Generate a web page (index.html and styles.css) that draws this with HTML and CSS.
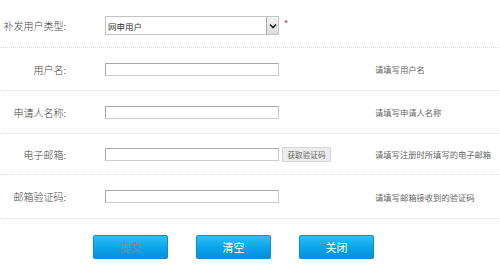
FILE: index.html
```html
<!DOCTYPE html>
<html lang="zh-CN">
<head>
<meta charset="utf-8">
<title>补发用户</title>
<link rel="stylesheet" href="styles.css">
</head>
<body>
<div class="form">
  <div class="row row-first">
    <div class="label">补发用户类型:</div>
    <div class="field">
      <div class="select">
        <span class="select-text">网申用户</span>
        <span class="select-btn">
          <svg width="8" height="6" viewBox="0 0 8 6"><path d="M1 1.5 L4 4.5 L7 1.5" fill="none" stroke="#222" stroke-width="1.6"/></svg>
        </span>
      </div>
      <span class="req">*</span>
    </div>
    <div class="hint"></div>
  </div>
  <div class="row">
    <div class="label">用户名:</div>
    <div class="field"><div class="input"></div></div>
    <div class="hint">请填写用户名</div>
  </div>
  <div class="row">
    <div class="label">申请人名称:</div>
    <div class="field"><div class="input"></div></div>
    <div class="hint">请填写申请人名称</div>
  </div>
  <div class="row row-mail">
    <div class="label">电子邮箱:</div>
    <div class="field"><div class="input"></div><div class="code-btn">获取验证码</div></div>
    <div class="hint">请填写注册时所填写的电子邮箱</div>
  </div>
  <div class="row row-last">
    <div class="label">邮箱验证码:</div>
    <div class="field"><div class="input"></div></div>
    <div class="hint">请填写邮箱接收到的验证码</div>
  </div>
  <div class="actions">
    <div class="btn btn-disabled">提交</div>
    <div class="btn">清空</div>
    <div class="btn">关闭</div>
  </div>
</div>
</body>
</html>
```
FILE: styles.css
```css
html, body {
  margin: 0;
  padding: 0;
  background: #fff;
}
body {
  font-family: "Noto Sans CJK SC", "Noto Sans", sans-serif;
  color: #333;
}
.form {
  width: 500px;
}
.row {
  display: flex;
  align-items: center;
  height: 42px;
  border-bottom: 1px dotted #dedede;
}
.row-first {
  padding-top: 4px;
  box-sizing: border-box;
  height: 48px;
}
.row-mail {
  height: 40px;
}
.row-last {
  height: 43px;
}
.label {
  width: 66px;
  text-align: right;
  font-size: 10px;
  font-weight: 300;
  color: #444;
  white-space: nowrap;
}
.field {
  width: 270px;
  margin-left: 39px;
  display: flex;
  align-items: center;
}
.select {
  width: 174px;
  height: 19px;
  box-sizing: border-box;
  border: 1px solid #c4c4c4;
  display: flex;
  align-items: center;
  justify-content: space-between;
  background: #fff;
}
.select-text {
  font-size: 8.5px;
  color: #333;
  padding-left: 2px;
}
.select-btn {
  width: 12px;
  height: 17px;
  box-sizing: border-box;
  border-left: 1px solid #aaa;
  background: linear-gradient(#f4f4f4, #dcdcdc);
  display: flex;
  align-items: center;
  justify-content: center;
}
.req {
  color: #e02020;
  font-size: 9px;
  margin-left: 5px;
  margin-top: -4px;
}
.input {
  width: 174px;
  height: 13px;
  box-sizing: border-box;
  border: 1px solid #a9a9a9;
  border-bottom-color: #ccc;
  border-right-color: #ccc;
  background: #fff;
}
.code-btn {
  margin-left: 3px;
  width: 49px;
  height: 15px;
  box-sizing: border-box;
  border: 1px solid #d6d6d6;
  background: #ededed;
  font-size: 7.6px;
  color: #666;
  display: flex;
  align-items: center;
  justify-content: center;
  white-space: nowrap;
}
.hint {
  font-size: 8.3px;
  color: #666;
  white-space: nowrap;
}
.actions {
  display: flex;
  gap: 28px;
  padding-left: 93px;
  margin-top: 16px;
}
.btn {
  width: 75px;
  height: 24px;
  box-sizing: border-box;
  border-radius: 2px;
  background: linear-gradient(#2ec0f6, #0aa3ea 55%, #0390dc);
  border: 1px solid #0a8fd4;
  box-shadow: 0 1px 1px rgba(0,0,0,0.25);
  color: #fff;
  font-size: 11px;
  display: flex;
  align-items: center;
  justify-content: center;
}
.btn-disabled {
  color: #7b8d9c;
}
```
